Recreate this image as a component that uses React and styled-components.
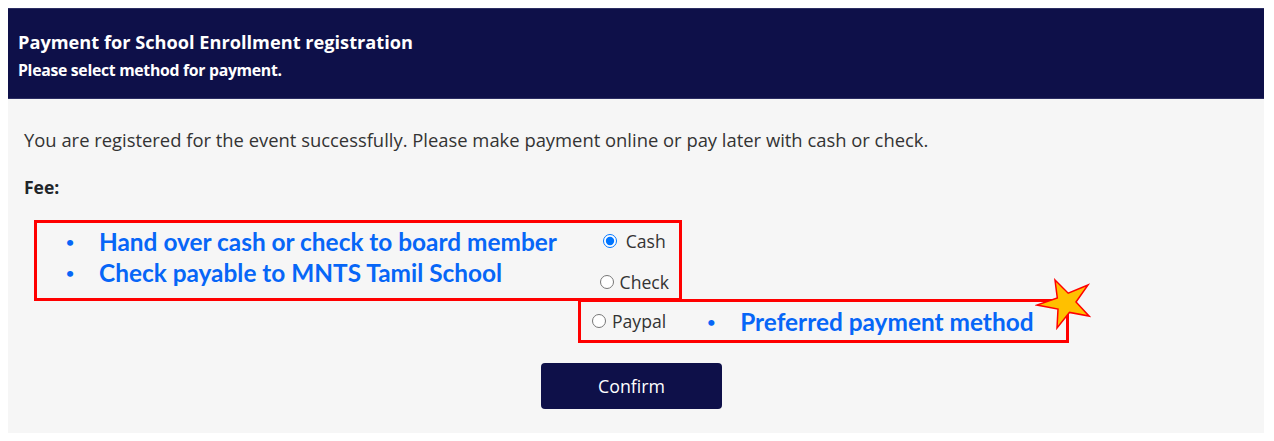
import React from "react";
import styled, { createGlobalStyle } from "styled-components";

const GlobalStyle = createGlobalStyle`
  body {
    margin: 8px;
    background: #ffffff;
    font-family: "Open Sans", "Noto Sans", sans-serif;
    color: #212529;
  }
`;

const Panel = styled.div`
  width: 1256px;
`;

const Header = styled.div`
  background: #0e1049;
  color: #ffffff;
  height: 91px;
  box-sizing: border-box;
  padding: 22px 10px 0;
  border-top: 1px solid #2c2e63;
  border-bottom: 1px solid #2c2e63;
`;

const Title = styled.div`
  font-size: 18.2px;
  font-weight: 700;
  line-height: 22px;
`;

const Subtitle = styled.div`
  font-size: 15.8px;
  font-weight: 700;
  line-height: 20px;
  margin-top: 7px;
  letter-spacing: -0.3px;
`;

const Body = styled.div`
  background: #f6f6f6;
  padding: 29px 16px 24px;
`;

const Message = styled.p`
  margin: 0;
  font-size: 18.4px;
  line-height: 24px;
  color: #333333;
`;

const FeeLabel = styled.div`
  margin-top: 23px;
  font-size: 17.5px;
  font-weight: 700;
  line-height: 24px;
`;

const NoteBox = styled.div`
  position: relative;
  display: flex;
  box-sizing: border-box;
  border: 3px solid #ff0000;
  margin-left: ${p => p.$left}px;
  width: ${p => p.$width}px;
  height: ${p => p.$height}px;
  margin-top: ${p => p.$top || 0}px;
`;

const NoteList = styled.ul`
  flex: 1;
  margin: 0;
  padding: 3px 0 0 29px;
  list-style: none;
`;

const Note = styled.li`
  display: flex;
  align-items: center;
  font-family: "Lato", "Open Sans", sans-serif;
  font-weight: 700;
  font-size: 24.4px;
  line-height: 31px;
  color: #0766f7;
  white-space: nowrap;
  &::before {
    content: "•";
    font-size: 14px;
    width: 33px;
    flex: none;
  }
`;

const Options = styled.div`
  display: flex;
  flex-direction: column;
  align-items: center;
  gap: 17px;
  padding: 6px 10px 0 0;
`;

const Option = styled.label`
  display: flex;
  align-items: center;
  gap: ${p => (p.$wide ? 9 : 6)}px;
  height: 24px;
  font-size: 17.6px;
  color: #333333;
  input {
    margin: 0;
    width: 14px;
    height: 14px;
    accent-color: #0075ff;
  }
`;

const PaypalRow = styled.div`
  display: flex;
  align-items: center;
  padding-left: 11px;
  gap: 41px;
`;

const Star = styled.svg`
  position: absolute;
  left: 454px;
  top: -24px;
`;

const ButtonRow = styled.div`
  display: flex;
  padding-left: 517px;
  margin-top: 20px;
`;

const Confirm = styled.button`
  width: 181px;
  height: 46px;
  border: none;
  border-radius: 4px;
  background: #0e1049;
  color: #ffffff;
  font-family: "Open Sans", sans-serif;
  font-size: 17.8px;
`;

export default function App() {
  return (
    <>
      <GlobalStyle />
      <Panel>
        <Header>
          <Title>Payment for School Enrollment registration</Title>
          <Subtitle>Please select method for payment.</Subtitle>
        </Header>
        <Body>
          <Message>
            You are registered for the event successfully. Please make payment online or pay later with cash or check.
          </Message>
          <FeeLabel>Fee:</FeeLabel>
          <NoteBox $left={10} $width={648} $height={81} $top={21}>
            <NoteList>
              <Note>Hand over cash or check to board member</Note>
              <Note>Check payable to MNTS Tamil School</Note>
            </NoteList>
            <Options>
              <Option $wide>
                <input type="radio" name="pay" defaultChecked /> Cash
              </Option>
              <Option>
                <input type="radio" name="pay" /> Check
              </Option>
            </Options>
          </NoteBox>
          <NoteBox $left={554} $width={491} $height={44} $top={-2}>
            <PaypalRow>
              <Option>
                <input type="radio" name="pay" /> Paypal
              </Option>
              <Note>Preferred payment method</Note>
            </PaypalRow>
            <Star width="56" height="52" viewBox="0 0 56 52">
              <polygon
                points="20,2 33.2,15.2 53,7 41,24 54,38 34.5,34.4 22,50 23,31 2,27 22.3,20"
                fill="#ffc000"
                stroke="#ff0000"
                strokeWidth="1.5"
              />
            </Star>
          </NoteBox>
          <ButtonRow>
            <Confirm>Confirm</Confirm>
          </ButtonRow>
        </Body>
      </Panel>
    </>
  );
}
